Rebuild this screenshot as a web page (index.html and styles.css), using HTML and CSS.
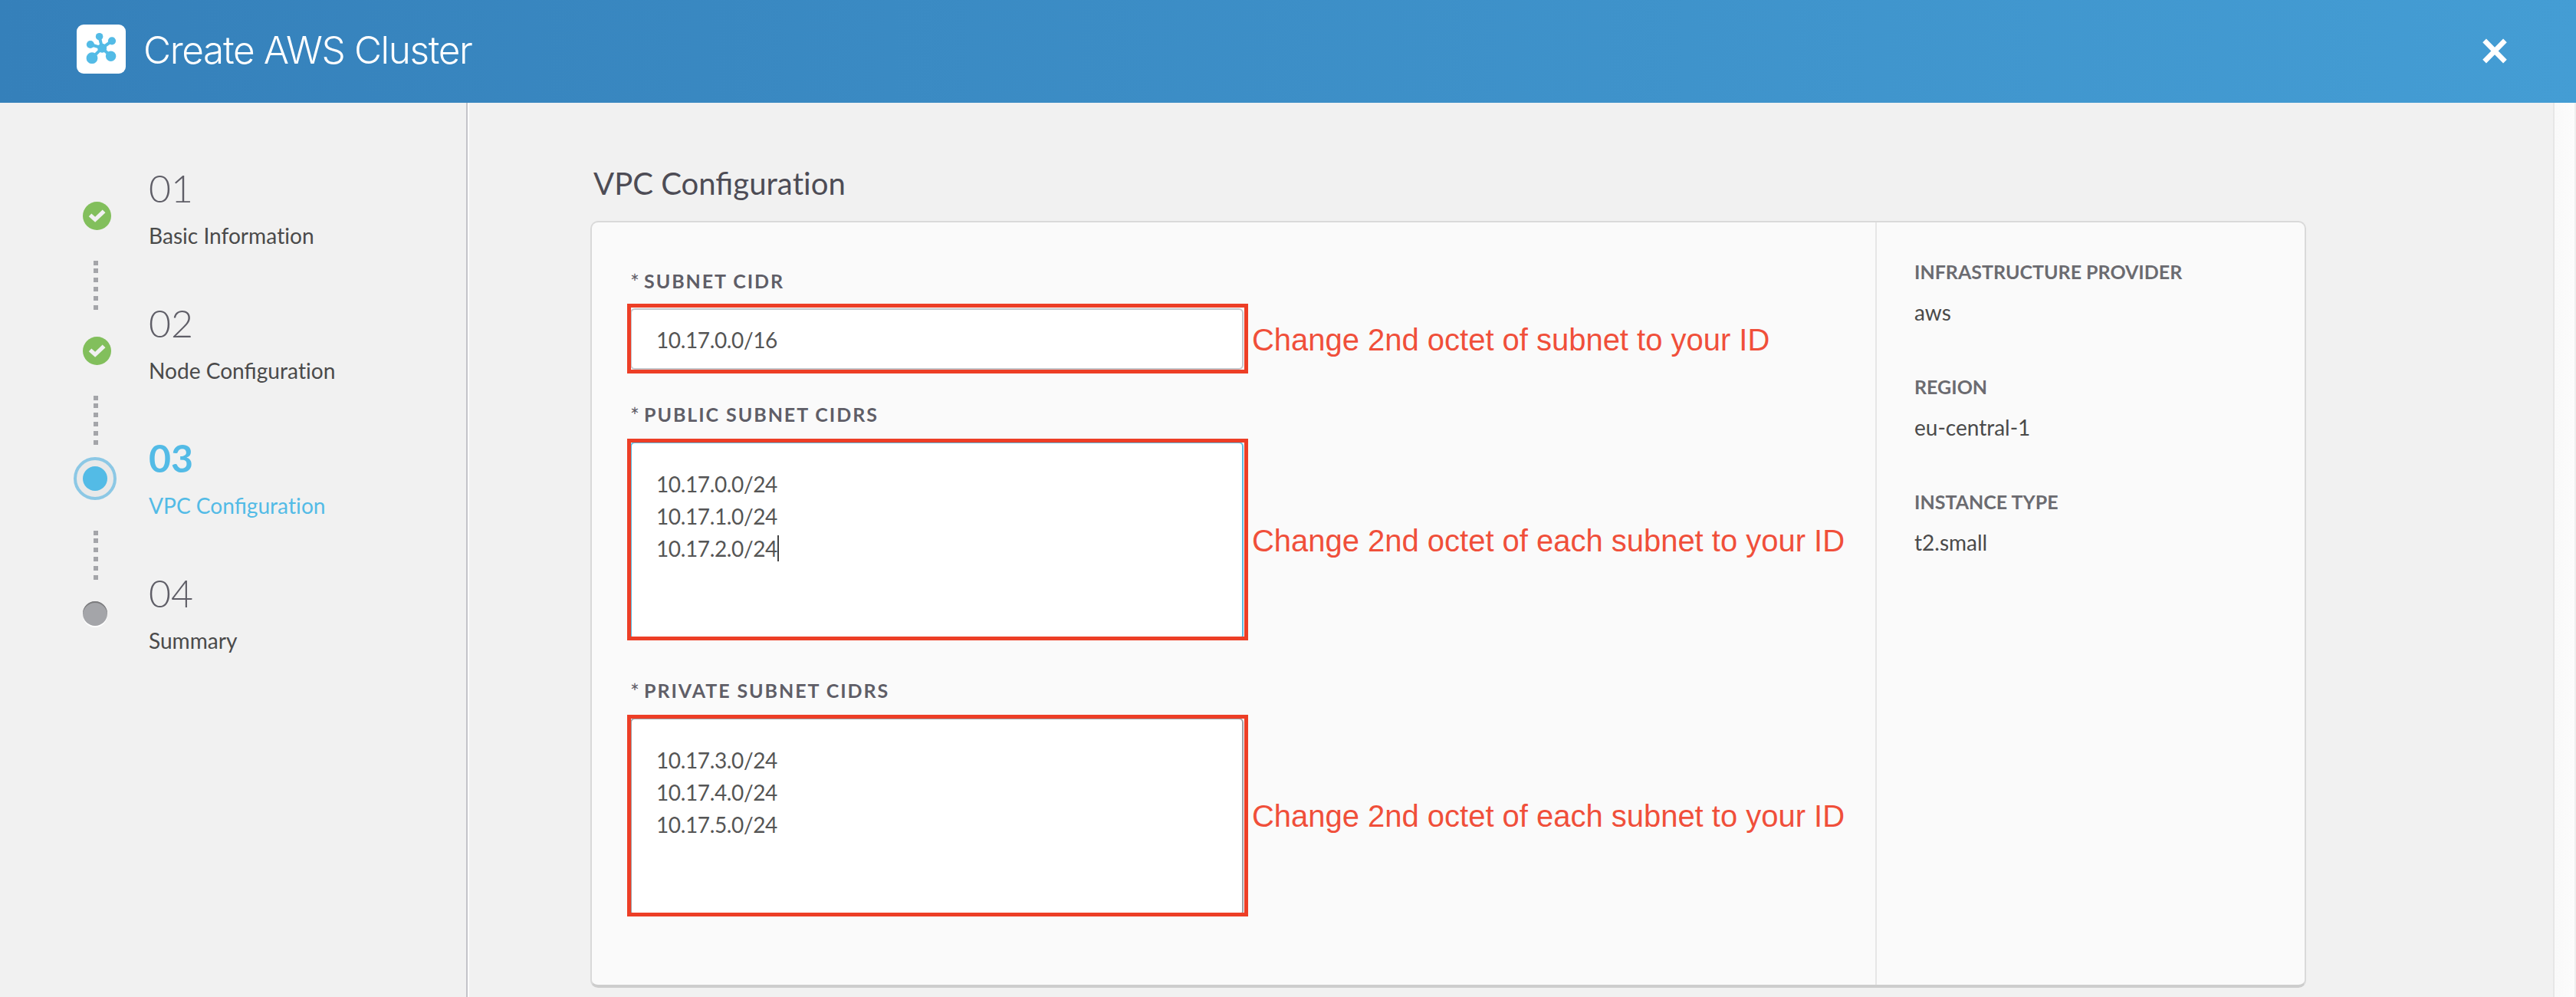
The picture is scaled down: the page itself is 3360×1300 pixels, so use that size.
FILE: index.html
```
<!DOCTYPE html>
<html lang="en">
<head>
<meta charset="utf-8">
<title>Create AWS Cluster</title>
<link rel="stylesheet" href="styles.css">
</head>
<body>
<header class="topbar">
  <svg class="logo" viewBox="0 0 64 64" width="64" height="64">
    <rect width="64" height="64" rx="9" fill="#fff"/>
    <g stroke="#53bbe6" stroke-width="4" fill="#53bbe6">
      <path d="M33.2 30.7L29.6 15.7M33.2 30.7L46 21.3M33.2 30.7L17.9 26M33.2 30.7L20 43.7M33.2 30.7L44.6 41.3"/>
      <g stroke="none">
        <circle cx="33.2" cy="30.7" r="6"/>
        <circle cx="29.6" cy="15.7" r="4.8"/>
        <circle cx="46" cy="21.3" r="5.1"/>
        <circle cx="17.9" cy="26" r="5.1"/>
        <circle cx="20" cy="43.7" r="7.4"/>
        <circle cx="44.6" cy="41.3" r="6.7"/>
      </g>
    </g>
  </svg>
  <h1 class="title">Create AWS Cluster</h1>
  <svg class="close" viewBox="0 0 32 33" width="32" height="33">
    <path d="M2.6 2.9L29.4 30.1M29.4 2.9L2.6 30.1" stroke="#fff" stroke-width="6.6"/>
  </svg>
</header>
<div class="body">
  <nav class="sidebar">
    <div class="step">
      <div class="rail">
        <svg class="check" viewBox="-18.5 -18.5 37 37" width="37" height="37"><circle r="18.5" fill="#82bf5c"/><path d="M-10.7 .7L-7.2 -3L-2.4 1.3L7.2 -8L11 -4.3L-2.4 8.3Z" fill="#f1f1f1"/></svg>
        <svg class="dots" viewBox="0 0 6 64" width="6" height="64"><path d="M0 0h6v6H0zM0 10h6v6H0zM0 22h6v6H0zM0 34h6v6H0zM0 46h6v6H0zM0 58h6v6H0z" fill="#a4a5a9"/></svg>
      </div>
      <div class="step-text"><div class="num">01</div><div class="name">Basic Informa<span class="nolig">ti</span>on</div></div>
    </div>
    <div class="step">
      <div class="rail">
        <svg class="check" viewBox="-18.5 -18.5 37 37" width="37" height="37"><circle r="18.5" fill="#82bf5c"/><path d="M-10.7 .7L-7.2 -3L-2.4 1.3L7.2 -8L11 -4.3L-2.4 8.3Z" fill="#f1f1f1"/></svg>
        <svg class="dots" viewBox="0 0 6 64" width="6" height="64"><path d="M0 0h6v6H0zM0 10h6v6H0zM0 22h6v6H0zM0 34h6v6H0zM0 46h6v6H0zM0 58h6v6H0z" fill="#a4a5a9"/></svg>
      </div>
      <div class="step-text"><div class="num">02</div><div class="name">Node Configura<span class="nolig">ti</span>on</div></div>
    </div>
    <div class="step active">
      <div class="rail">
        <div class="ring"><div class="core"></div></div>
        <svg class="dots" viewBox="0 0 6 64" width="6" height="64"><path d="M0 0h6v6H0zM0 10h6v6H0zM0 22h6v6H0zM0 34h6v6H0zM0 46h6v6H0zM0 58h6v6H0z" fill="#a4a5a9"/></svg>
      </div>
      <div class="step-text"><div class="num">03</div><div class="name">VPC Configura<span class="nolig">ti</span>on</div></div>
    </div>
    <div class="step">
      <div class="rail"><div class="pending"></div></div>
      <div class="step-text"><div class="num">04</div><div class="name">Summary</div></div>
    </div>
  </nav>
  <main class="main">
    <h2 class="heading">VPC Configura<span class="nolig">ti</span>on</h2>
    <section class="card">
      <div class="form">
        <div class="label"><i>*</i><span>SUBNET CIDR</span></div>
        <div class="field single">10.17.0.0/16
          <div class="mark"></div><p class="note">Change 2nd octet of subnet to your ID</p>
        </div>
        <div class="label second"><i>*</i><span>PUBLIC SUBNET CIDRS</span></div>
        <div class="field area focused">10.17.0.0/24<br>10.17.1.0/24<br>10.17.2.0/24<b class="caret"></b>
          <div class="mark"></div><p class="note">Change 2nd octet of each subnet to your ID</p>
        </div>
        <div class="label third"><i>*</i><span>PRIVATE SUBNET CIDRS</span></div>
        <div class="field area idle">10.17.3.0/24<br>10.17.4.0/24<br>10.17.5.0/24
          <div class="mark"></div><p class="note">Change 2nd octet of each subnet to your ID</p>
        </div>
      </div>
      <dl class="summary">
        <dt>INFRASTRUCTURE PROVIDER</dt><dd>aws</dd>
        <dt>REGION</dt><dd>eu-central-1</dd>
        <dt>INSTANCE TYPE</dt><dd>t2.small</dd>
      </dl>
    </section>
  </main>
  <div class="scrollbar"></div>
</div>
</body>
</html>
```
FILE: styles.css
```
* { box-sizing: border-box; }
body {
  margin: 0;
  height: 1300px;
  overflow: hidden;
  background: #f1f1f1;
  color: #4a4a4a;
  font-family: Lato, sans-serif;
  font-size: 28px;
}
.nolig { font-variant-ligatures: none; }
.topbar {
  display: flex;
  align-items: flex-start;
  height: 134px;
  padding: 32px 90px 0 100px;
  background: linear-gradient(90deg, #3580ba, #449dd4);
}
.title {
  margin: 3px 0 0 23px;
  color: #fff;
  font: 300 49.5px/60px Inter, sans-serif;
  letter-spacing: -1.36px;
  white-space: nowrap;
}
.close { margin: 18px 0 0 auto; }
.body { display: flex; height: 1166px; }
.sidebar {
  flex: none;
  width: 612px;
  padding: 80px 0 0 96px;
  border-right: 2px solid #fcfcfc;
  box-shadow: inset -2px 0 #c4c4c9;
}
.step { display: flex; height: 176px; }
.rail {
  display: flex;
  flex-direction: column;
  width: 98px;
  height: 190px;
  flex: none;
}
.check { margin: 49px 0 40px 11.5px; flex: none; }
.dots { margin-left: 26px; flex: none; }
.ring {
  flex: none;
  width: 56px;
  height: 56px;
  margin: 30px 0 40px;
  padding: 8px;
  border: 4px solid #8cc8e5;
  border-radius: 50%;
  background: #e9e9e9;
}
.core { width: 32px; height: 32px; border-radius: 50%; background: #53bbe6; }
.pending {
  width: 32px;
  height: 32px;
  margin: 42px 0 0 12px;
  border-radius: 50%;
  background: #a4a5a9;
  box-shadow: inset 0 2px #7c7c7e, 0 2px #fff;
}
.num { height: 60px; font-size: 50px; line-height: 62px; font-weight: 300; color: #5f5e67; }
.name { margin-top: 16px; font-size: 28.1px; line-height: 34px; }
.active .num { font-weight: 700; color: #53bbe6; }
.active .name { color: #53bbe6; }
.main { flex: 1; padding: 80px 0 0 158px; }
.heading {
  height: 48px;
  margin: 0 0 26px 4px;
  font-size: 40.1px;
  line-height: 50px;
  font-weight: 400;
  color: #4d4c55;
}
.card {
  display: flex;
  width: 2238px;
  height: 1000px;
  border: 2px solid #d9d9d9;
  border-bottom: 4px solid #cdcdcd;
  border-radius: 10px;
  background: #fafafa;
}
.form { width: 1676px; padding: 60px 0 0 50px; border-right: 2px solid #e6e6e6; }
.label {
  display: flex;
  height: 32px;
  margin-bottom: 20px;
  line-height: 32px;
  font-size: 25px;
  font-weight: 700;
  letter-spacing: 1.94px;
  color: #5f5e67;
}
.label i { width: 18px; font-size: 28px; line-height: 36px; font-style: normal; font-weight: 400; }
.second { margin-top: 42px; }
.third { margin-top: 50px; }
.field {
  position: relative;
  width: 800px;
  border: 2px solid #c5c6cb;
  border-radius: 6px;
  padding: 32px 32px 0;
  line-height: 42px;
  letter-spacing: -0.37px;
  color: #555;
  background: #fff;
}
.single { height: 80px; padding-top: 18px; }
.area { height: 258px; }
.focused { border-color: #5bb9de; }
.idle { border-color: #9fa0a5; }
/* red highlight drawn over each field */
.mark { position: absolute; left: -6px; top: -8px; width: 810px; height: 91px; border: 5px solid #ed3e26; }
.area .mark { top: -6px; height: 263px; }
.note {
  position: absolute;
  left: 809px;
  top: 16px;
  margin: 0;
  font: 40px/46px "Liberation Sans", sans-serif;
  letter-spacing: -0.02px;
  color: #f04f3a;
  white-space: nowrap;
}
.area .note { top: 104px; }
.idle .note { top: 103px; }
.caret { position: absolute; left: 190px; top: 120px; width: 2px; height: 34px; background: #444; }
.summary { margin: 0; padding: 48px 0 0 49px; }
dt { height: 32px; line-height: 32px; font-size: 25px; font-weight: 700; color: #6b6b70; }
dd { height: 34px; margin: 20px 0 64px; line-height: 34px; }
.scrollbar {
  flex: none;
  width: 30px;
  border-left: 2px solid #e7e7e7;
  border-right: 2px solid #efefef;
  background: linear-gradient(90deg, #f9f9f9, #fcfcfc);
}
```
